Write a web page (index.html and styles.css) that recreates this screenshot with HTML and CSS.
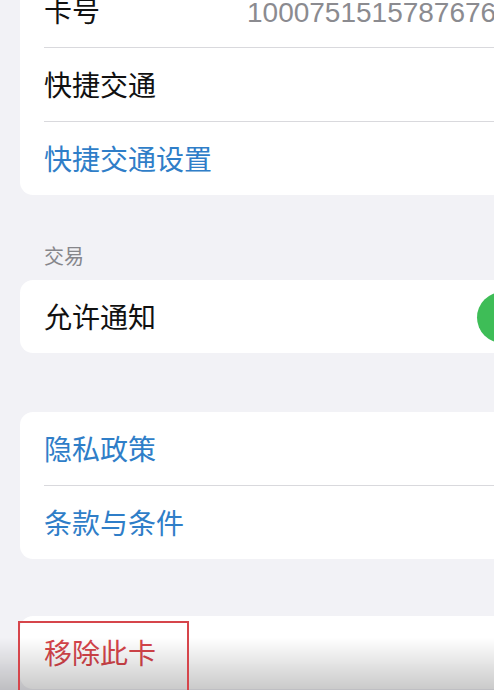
FILE: index.html
```html
<!DOCTYPE html>
<html lang="zh-CN">
<head>
<meta charset="utf-8">
<title>卡片详情</title>
<link rel="stylesheet" href="styles.css">
</head>
<body>
<div class="page">
  <section class="card card-first">
    <div class="row">
      <div class="row-inner row-grid">
        <span class="label">卡号</span>
        <span class="value">1000751515787676</span>
      </div>
    </div>
    <div class="row">
      <div class="row-inner divided"><span class="label">快捷交通</span></div>
    </div>
    <div class="row">
      <div class="row-inner divided"><span class="label link">快捷交通设置</span></div>
    </div>
  </section>

  <div class="section-header">交易</div>
  <section class="card">
    <div class="row">
      <div class="row-inner">
        <span class="label">允许通知</span>
        <span class="toggle"><span class="knob"></span></span>
      </div>
    </div>
  </section>

  <section class="card card-gap">
    <div class="row">
      <div class="row-inner"><span class="label link">隐私政策</span></div>
    </div>
    <div class="row">
      <div class="row-inner divided"><span class="label link">条款与条件</span></div>
    </div>
  </section>

  <section class="card card-gap-last">
    <div class="row">
      <div class="row-inner"><span class="label danger">移除此卡</span></div>
    </div>
  </section>
</div>
<div class="bottom-shade"></div>
<div class="highlight-box"></div>
</body>
</html>
```

FILE: styles.css
```css
html, body {
  margin: 0;
  padding: 0;
  height: 100%;
  overflow: hidden;
}

body {
  background: #f2f2f6;
  font-family: "Liberation Sans", "Noto Sans CJK SC", sans-serif;
  color: #111;
}

.page {
  padding-left: 20px;
}

.card {
  width: 567px;
  background: #ffffff;
  border-radius: 13px;
  overflow: hidden;
}

.card-first {
  margin-top: -26px;
}

.card-gap {
  margin-top: 59px;
}

.card-gap-last {
  margin-top: 57px;
}

.row {
  padding-left: 24px;
}

.row-inner {
  box-sizing: border-box;
  height: 73px;
  display: flex;
  align-items: center;
  padding-top: 5px;
  padding-right: 26px;
}

.row-inner.divided {
  height: 74px;
  border-top: 1px solid #d9d9dd;
}

.row-grid {
  display: grid;
  grid-template-columns: 203px auto;
  align-items: center;
}

.label {
  font-size: 28px;
  line-height: 36px;
  white-space: nowrap;
}

.value {
  font-size: 28px;
  line-height: 36px;
  color: #8b8b90;
  white-space: nowrap;
}

.link {
  color: #2f7ec8;
}

.danger {
  color: #d6454b;
}

.section-header {
  margin-top: 48px;
  padding: 0 24px 9px;
  font-size: 20px;
  line-height: 28px;
  color: #86868b;
}

.card .row-inner .toggle {
  margin-left: auto;
  margin-top: -4px;
}

.toggle {
  position: relative;
  display: block;
  width: 84px;
  height: 51px;
  border-radius: 26px;
  background: #3ebd57;
  flex: none;
}

.knob {
  position: absolute;
  right: 3px;
  top: 3px;
  width: 45px;
  height: 45px;
  border-radius: 50%;
  background: #fff;
}

.bottom-shade {
  position: fixed;
  left: 0;
  right: 0;
  bottom: 0;
  height: 52px;
  background: linear-gradient(to bottom, rgba(0, 0, 0, 0), rgba(0, 0, 0, 0.21));
  pointer-events: none;
}

.highlight-box {
  position: fixed;
  left: 18px;
  top: 621px;
  width: 167px;
  height: 90px;
  border: 2.5px solid #d6454b;
  pointer-events: none;
}
```
